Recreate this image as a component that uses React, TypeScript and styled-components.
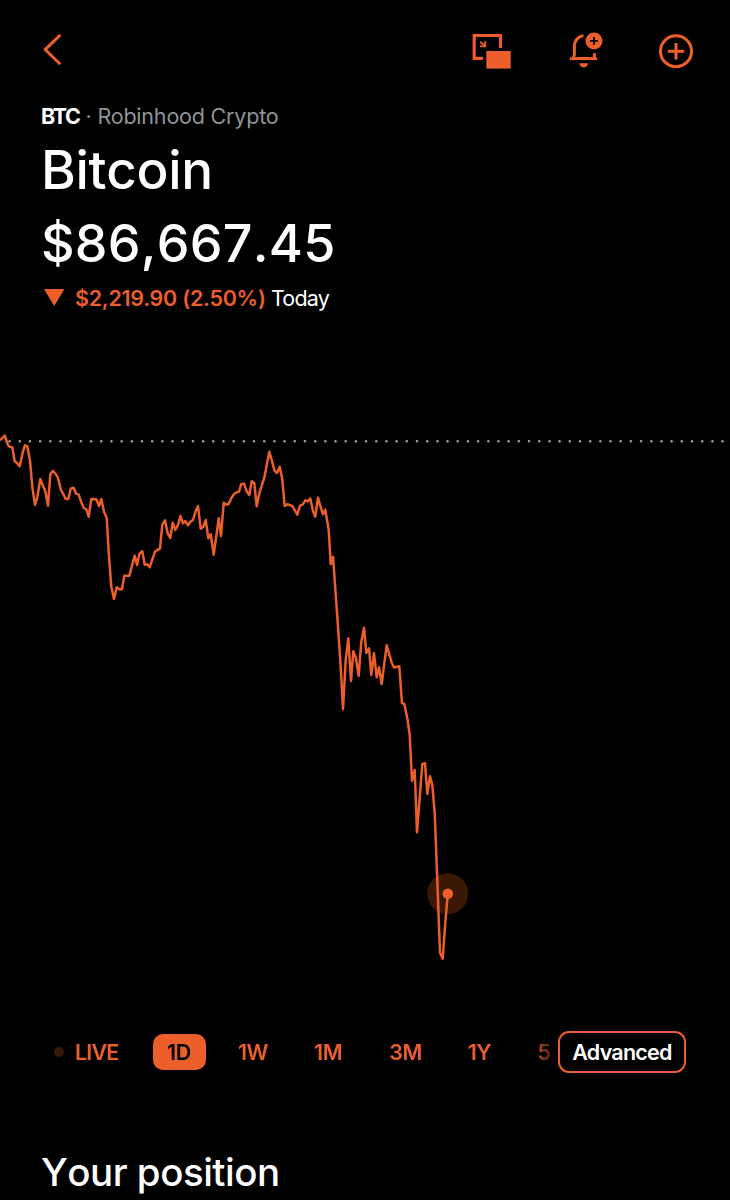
import React from "react";
import styled, { createGlobalStyle } from "styled-components";

const ORANGE = "#ec5e2a";

const GlobalStyle = createGlobalStyle`
  * { box-sizing: border-box; }
  html, body { margin: 0; background: #000; }
  body { font-family: Inter, "Liberation Sans", sans-serif; color: #fff; overflow: hidden; }
`;

const Screen = styled.main`
  display: flex;
  flex-direction: column;
  width: 730px;
  height: 1200px;
  overflow: hidden;
  background: #000;
`;

const TopBar = styled.header`
  display: flex;
  align-items: center;
  justify-content: space-between;
  height: 102px;
  padding: 0 36px 0 40px;
  flex: none;
`;

const Actions = styled.div`
  display: flex;
  align-items: center;
  gap: 54px;
`;

const IconButton = styled.button`
  display: flex;
  padding: 0;
  border: 0;
  background: none;
  color: ${ORANGE};
`;

const Summary = styled.section`
  display: flex;
  flex-direction: column;
  flex: none;
  height: 318px;
  padding-left: 41px;
`;

const Line = styled.div<{ $h: number; $shift?: number }>`
  display: flex;
  align-items: center;
  height: ${(p) => p.$h}px;
  padding-left: ${(p) => p.$shift ?? 0}px;
  white-space: pre;
`;

const Text = styled.span<{
  $size: number;
  $weight?: number;
  $spacing?: number;
  $color?: string;
}>`
  font-size: ${(p) => p.$size}px;
  line-height: 1;
  font-weight: ${(p) => p.$weight ?? 400};
  letter-spacing: ${(p) => p.$spacing ?? 0}px;
  color: ${(p) => p.$color ?? "#fff"};
`;

const Display = styled(Text)`
  font-weight: 500;
  font-kerning: none;
`;

const ChangeArrow = styled.svg`
  margin: 0 10px 2px 0;
`;

const Chart = styled.svg`
  display: block;
  flex: none;
`;

const RangeBar = styled.nav`
  display: flex;
  align-items: center;
  flex: none;
  height: 42px;
  margin-top: 51px;
`;

const Ranges = styled.div`
  display: flex;
  align-items: center;
  width: 558px;
  height: 42px;
  padding-left: 54px;
  overflow: hidden;
  mask-image: linear-gradient(to right, #000 532px, transparent 560px);
`;

const Live = styled.div`
  display: flex;
  align-items: center;
  gap: 11px;
  width: 88px;
  padding-top: 2px;
  flex: none;
`;

const LiveDot = styled.i`
  width: 10px;
  height: 10px;
  margin-bottom: 2px;
  border-radius: 50%;
  background: #3a1907;
`;

const RangeCell = styled.div<{ $w: number }>`
  display: flex;
  justify-content: center;
  flex: none;
  width: ${(p) => p.$w}px;
`;

const RangeButton = styled.button<{ $active?: boolean }>`
  display: flex;
  align-items: center;
  justify-content: center;
  width: 53px;
  height: 36px;
  padding: 2px 0 0;
  border: 0;
  border-radius: 10px;
  background: ${(p) => (p.$active ? ORANGE : "none")};
  font-family: inherit;
`;

const Advanced = styled.button`
  width: 128px;
  height: 42px;
  padding: 2px 0 0;
  border: 2px solid ${ORANGE};
  border-radius: 11px;
  background: #000;
  font-family: inherit;
`;

const Position = styled.h2`
  margin: 69px 0 0;
  padding-left: 41px;
  height: 60px;
  display: flex;
  align-items: center;
  flex: none;
`;

const points =
  "0,440.5 4.7,435.5 8,445 9.5,446.7 12.3,447.5 14.7,461.3 16.7,462.7 19.7,466.3 22.7,452.5 25,445.3 27.3,446.3 30,460.7 32.3,486.7 35,505 37.3,497.3 40.3,479 43,485.7 45.3,491 48,505.7 50.3,474.3 53,470.7 55.7,474 58,478 60.7,489.3 63.3,494 65.7,499 68.3,499 70.7,488.7 73.7,487.7 76,493.7 78.7,494.7 81.3,502.3 83.7,508 86.3,509.3 88.7,516.7 91.3,499 96.3,499.3 99,506 101.3,499 104,511.7 106.7,517.7 109,556.7 111.3,586.7 114,599 116.7,587.3 119.3,589.3 122,589.3 124.3,575.7 129.3,575.7 132,565.7 134.7,555.7 137,565 139.3,554 142.3,551.3 144.7,564.7 147.3,564.3 149.7,567.3 155,551.7 157.3,550 160,548.7 162.3,524.7 165,520.3 167.7,533.3 170.3,538 172.7,522.7 175.3,530 178,525 180.3,516 183,523.3 185.3,521 188,525.3 190.7,521.3 193,520 195.7,511 198,506 200.7,528.7 203.3,526.7 205.7,520 208.3,538.3 210.7,534 213.7,554.7 216.3,536 218.7,518.3 221,536 223.7,502.7 226,504.7 228.7,504 231.3,498.3 234,494 236.7,492.3 239,491.7 241.3,484 244,483.7 246.7,491.3 249.3,495 251.7,481.3 254.3,483.3 256.7,506.3 259.3,493.3 264.3,477.7 269.3,451.7 272,461 274.3,470.3 277,473 279.7,466.7 282.3,479.3 284.7,506 287.3,504.3 292.3,506 297.3,514.7 300,505.7 302.7,504.7 305.3,500.3 307.7,501.3 310.3,498.7 313,511 315.3,516.7 318,497.7 320.3,506 323,514.3 325.3,509.7 328.7,530 330.7,564 333,556.7 338,626.7 340.7,666.7 343,709.3 345.7,660 348.3,638.3 351,681 353.3,651.3 356,658.3 358.7,676 361.3,641.7 364,627.7 366.3,653 369,648.3 371.3,675 374,653.3 376.7,677.3 379,667.3 381.7,684 384.3,663.3 386.7,645.3 391.7,662.7 394,667.5 399.3,666.3 402,703 404.3,704 407.3,718.3 409.7,735 412,780.7 414.7,770 417,832.3 422.3,764 425,763.3 427.3,794 430,776.3 432.3,785 434.7,813.3 437.3,880 440,952.7 442.7,958.7 445,926.7 447.7,894";

const dots = Array.from({ length: 71 }, (_, i) => 9.6 + i * 10.185);

const ranges = [
  { label: "1D", w: 74, active: true },
  { label: "1W", w: 74 },
  { label: "1M", w: 76 },
  { label: "3M", w: 79 },
  { label: "1Y", w: 69 },
  { label: "5", w: 60 },
];

export default function App() {
  return (
    <>
      <GlobalStyle />
      <Screen>
        <TopBar>
          <IconButton aria-label="Back">
            <svg width="24" height="34" viewBox="40 34 24 34" fill="none" stroke="currentColor" strokeWidth="3">
              <path d="M60.3 34.9 45.2 49.6 60.3 64.3" />
            </svg>
          </IconButton>
          <Actions>
            <IconButton aria-label="Picture in picture">
              <svg width="44" height="40" viewBox="470 31 44 40" fill="none" stroke="currentColor">
                <path d="M483 58.3H474.2V35.5H500.5V48" strokeWidth="3.2" />
                <path d="M480.2 41.6 485 46.2M485.2 41.3V46.3H480" strokeWidth="1.8" />
                <rect x="486.3" y="51" width="24.4" height="17.6" fill="currentColor" stroke="none" />
              </svg>
            </IconButton>
            <IconButton aria-label="Add alert">
              <svg width="36" height="40" viewBox="568 31 36 40" fill="none" stroke="currentColor">
                <path d="M583.4 35.5C577 37 574.4 41 574.4 46.5V54.5L573.2 58.6H594.4V53.2" strokeWidth="3" />
                <path d="M570 58.7H597.2" strokeWidth="2.8" />
                <path d="M579.2 63.3H588.2A4.6 5.2 0 0 1 579.2 63.3Z" fill="currentColor" stroke="none" />
                <circle cx="594" cy="40.9" r="8.5" fill="currentColor" stroke="none" />
                <path d="M590 40.9H598M594 36.9V44.9" stroke="#000" strokeWidth="1.7" />
              </svg>
            </IconButton>
            <IconButton aria-label="Add">
              <svg width="36" height="40" viewBox="658 31 36 40" fill="none" stroke="currentColor" strokeWidth="3.1">
                <circle cx="676" cy="51.2" r="15.5" />
                <path d="M667.8 51.2H684.2M676 43V59.4" />
              </svg>
            </IconButton>
          </Actions>
        </TopBar>

        <Summary>
          <Line $h={29}>
            <Text $size={21.5} $weight={700} $spacing={-1.3}>BTC</Text>
            <Text $size={21.5} $color="#8f9498" $spacing={-0.2}>{" · Robinhood Crypto"}</Text>
          </Line>
          <Line $h={78}>
            <Display $size={53} $spacing={-0.3}>Bitcoin</Display>
          </Line>
          <Line $h={69}>
            <Display $size={52} $spacing={0.25}>$86,667.45</Display>
          </Line>
          <Line $h={41} $shift={3}>
            <ChangeArrow width="21" height="18" viewBox="0 0 21 18">
              <path d="M0 0H20.5L10.2 17Z" fill={ORANGE} />
            </ChangeArrow>
            <Text $size={21.5} $weight={600} $color={ORANGE} $spacing={-0.27}>$2,219.90 (2.50%)</Text>
            <Text $size={21.5} $spacing={-0.8}>{" Today"}</Text>
          </Line>
        </Summary>

        <Chart width="730" height="560" viewBox="0 420 730 560">
          {dots.map((x) => (
            <circle key={x} cx={x} cy="441.2" r="1.2" fill="#a3a3a3" />
          ))}
          <circle cx="447.8" cy="893.7" r="20.5" fill="#3b1803" />
          <polyline points={points} fill="none" stroke={ORANGE} strokeWidth="2.5" strokeLinejoin="round" />
          <circle cx="447.8" cy="893.7" r="5.3" fill={ORANGE} />
        </Chart>

        <RangeBar>
          <Ranges>
            <Live>
              <LiveDot />
              <Text $size={21.5} $weight={600} $color={ORANGE} $spacing={-0.8}>LIVE</Text>
            </Live>
            {ranges.map((r) => (
              <RangeCell key={r.label} $w={r.w}>
                <RangeButton $active={r.active}>
                  <Text $size={21.5} $weight={600} $spacing={-0.4} $color={r.active ? "#000" : ORANGE}>{r.label}</Text>
                </RangeButton>
              </RangeCell>
            ))}
          </Ranges>
          <Advanced>
            <Text $size={21.5} $weight={600} $spacing={-0.75}>Advanced</Text>
          </Advanced>
        </RangeBar>

        <Position>
          <Display $size={38.5} $spacing={-0.5}>Your position</Display>
        </Position>
      </Screen>
    </>
  );
}
